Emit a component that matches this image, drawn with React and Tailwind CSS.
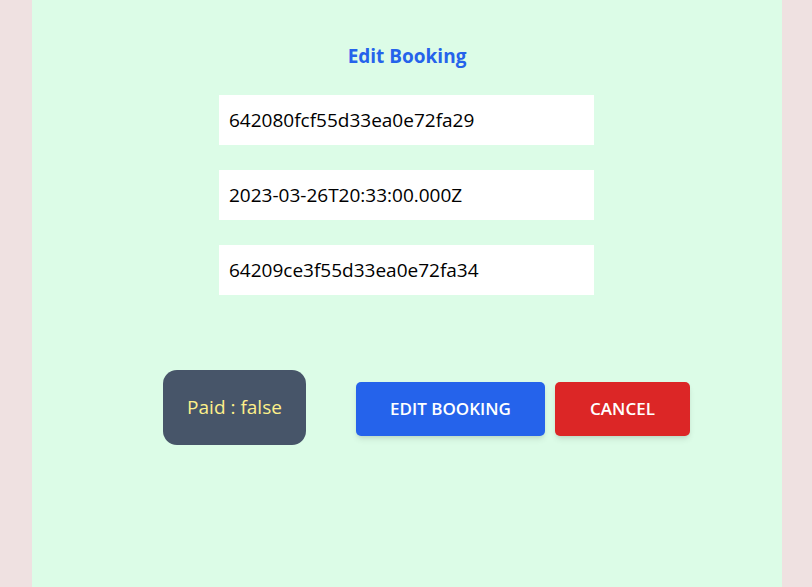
import React, { useState } from 'react';

const App = () => {
  const [userId, setUserId] = useState('642080fcf55d33ea0e72fa29');
  const [date, setDate] = useState('2023-03-26T20:33:00.000Z');
  const [roomId, setRoomId] = useState('64209ce3f55d33ea0e72fa34');
  const paid = false;

  return (
    <div className="min-h-[587px] bg-[#efe1e1]" style={{ fontFamily: '"Open Sans", "Noto Sans", sans-serif' }}>
      <div className="ml-[32px] w-[750px] min-h-[587px] bg-[#dcfce7]">
        <h2 className="pt-[42px] text-center text-[19px] leading-[28px] font-bold text-[#2563eb]">Edit Booking</h2>
        <div className="mt-[25px] ml-[187px] flex flex-col items-start gap-[25px]">
          <input
            value={userId}
            onChange={(e) => setUserId(e.target.value)}
            className="w-[375px] h-[50px] bg-white px-[10px] text-[19px] text-black outline-none"
          />
          <input
            value={date}
            onChange={(e) => setDate(e.target.value)}
            className="w-[375px] h-[50px] bg-white px-[10px] text-[19px] text-black outline-none"
          />
          <input
            value={roomId}
            onChange={(e) => setRoomId(e.target.value)}
            className="w-[375px] h-[50px] bg-white px-[10px] text-[19px] text-black outline-none"
          />
        </div>
        <div className="mt-[75px] ml-[131px] flex items-center">
          <div className="flex h-[75px] w-[143px] items-center justify-center rounded-[14px] bg-[#475569] text-[19px] text-[#fef08a]">
            Paid : {paid ? 'true' : 'false'}
          </div>
          <button className="ml-[50px] mt-[3px] h-[54px] w-[189px] rounded-[5px] bg-[#2563eb] text-[17px] font-semibold text-white uppercase shadow-md">
            Edit Booking
          </button>
          <button className="ml-[10px] mt-[3px] h-[54px] w-[135px] rounded-[5px] bg-[#dc2626] text-[17px] font-semibold text-white uppercase shadow-md">
            Cancel
          </button>
        </div>
      </div>
    </div>
  );
};

export default App;
